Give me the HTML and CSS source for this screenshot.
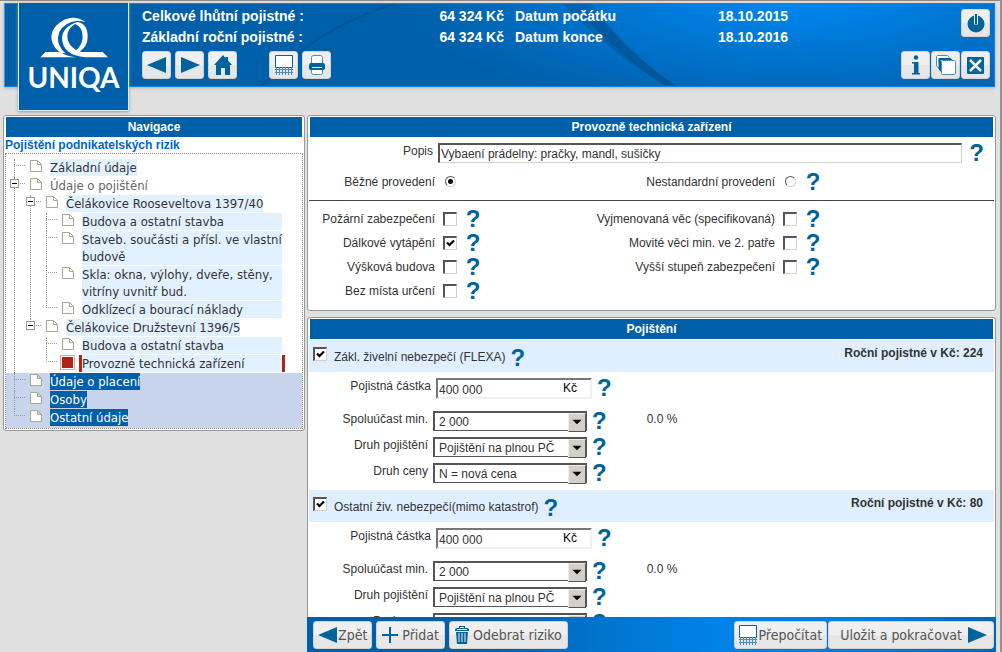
FILE: index.html
```html
<!DOCTYPE html>
<html lang="cs">
<head>
<meta charset="utf-8">
<title>Pojištění podnikatelských rizik</title>
<link rel="stylesheet" href="styles.css">
</head>
<body>
<svg class="defs" aria-hidden="true">
  <symbol id="i-page" viewBox="0 0 12 12"><path d="M.5.5h7l4 4v7H.5zM7.5.5v4h4" fill="#fff" stroke="#a9a98f"/></symbol>
  <symbol id="i-active" viewBox="0 0 15 15"><path d="M.5.5h14v14H.5z" fill="#fff" stroke="#dda7a3"/><path d="M2 2h11v11H2z" fill="#b02418"/></symbol>
  <symbol id="i-left" viewBox="0 0 20 18"><path d="M0 9 19 1v16z" fill="#00639c"/></symbol>
  <symbol id="i-right" viewBox="0 0 20 18"><path d="M20 9 1 1v16z" fill="#00639c"/></symbol>
  <symbol id="i-home" viewBox="0 0 18 20"><path d="M9 0 0 10h2v10h5v-7h4v7h5V10h2L14 5.500V2h-2.500v1z" fill="#00639c"/></symbol>
  <symbol id="i-calc" viewBox="0 0 18 20"><path d="M.5 12.500v-12h17v12z" fill="#fff" stroke="#00639c"/><path d="M1.500 12v8M4.500 12v8M7.500 12v8M10.500 12v8M13.500 12v8M16.500 12v8M0 14.500h18M0 17.500h18" stroke="#4a8db5"/></symbol>
  <symbol id="i-print" viewBox="0 0 16 20"><rect x="2.500" y=".5" width="11" height="19" rx="2" fill="#fff" stroke="#4a8db5"/><rect y="8" width="16" height="7" rx="2" fill="#00639c"/><path d="M3 12.500h10" stroke="#fff"/></symbol>
  <symbol id="i-power" viewBox="0 0 18 20"><circle cx="9" cy="11" r="8.500" fill="#00639c"/><path d="M9 1v10.500" stroke="#efefef" stroke-width="4"/><path d="M9 1v10" stroke="#00639c" stroke-width="2"/></symbol>
  <symbol id="i-info" viewBox="0 0 10 20"><circle cx="5" cy="2.500" r="2.200" fill="#00639c"/><path d="M1 7h6.500v11H9v1.500H1V18h2V8.500H1z" fill="#00639c"/></symbol>
  <symbol id="i-copy" viewBox="0 0 20 20"><path d="M3 13 .5 11V1.500l1-1h10l2 2" fill="#fff" stroke="#4a8db5"/><path d="M2.500 3h12l2 2H5v12l-2.500-3z" fill="#00639c"/><rect x="5.500" y="5.500" width="14" height="14" rx="1" fill="#fff" stroke="#4a8db5"/></symbol>
  <symbol id="i-close" viewBox="0 0 17 17"><rect width="17" height="17" rx="1" fill="#00639c"/><path d="m3 3 11 11M14 3 3 14" stroke="#fff" stroke-width="2.500"/></symbol>
  <symbol id="i-plus" viewBox="0 0 16 16"><path d="M8 0v16M0 8h16" stroke="#00639c" stroke-width="2"/></symbol>
  <symbol id="i-trash" viewBox="0 0 14 18"><path d="M0 4q0-2 2-2h10q2 0 2 2v1H0zM4 0h6v2H9V1H5v1H4zM1 6h12l-1 12H2z" fill="#00639c"/><path d="M4 7v9M7 7v9M10 7v9M2 3.500h10" stroke="#eee"/></symbol>
</svg>

<header class="top">
  <svg class="swoosh" viewBox="0 0 991 84" preserveAspectRatio="none" aria-hidden="true">
    <path d="M258 84Q310 25 390 0" fill="none" stroke="#004f8e" stroke-width="2" opacity=".6"/>
    <path d="M559 0h28q38 50 85 84h-10Q600 45 559 0z" fill="#00477f" opacity=".35"/>
    <path d="M600 18Q630 55 672 84h-10Q620 57 585 18z" fill="#00477f" opacity=".3"/>
  </svg>
  <a class="logo" href="#">
    <svg class="mark" viewBox="0 0 252 150" aria-hidden="true">
      <g fill="#fff">
        <path d="M160 30Q130 10 100 22 58 42 58 78q4 30 30 46h12Q76 102 78 76q4-34 40-46 22-6 42 0z"/>
        <path d="M136 30q31 4 31 45 0 30-27 45l-12-2q22-14 24-43 0-30-22-39-24 12-24 38 2 34 44 46h62l16 16h-68Q92 130 90 78q2-34 46-48z"/>
        <path d="M25 136l15-16h44q16 12 48 16z"/>
      </g>
    </svg>
    <span>UNIQA</span>
  </a>
  <div class="top-main">
    <dl class="summary">
      <dt>Celkové lhůtní pojistné :</dt><dd>64 324 Kč</dd><dt>Datum počátku</dt><dd>18.10.2015</dd>
      <dt>Základní roční pojistné :</dt><dd>64 324 Kč</dd><dt>Datum konce</dt><dd>18.10.2016</dd>
    </dl>
    <div class="tools">
      <button class="btn icon" aria-label="Zpět"><svg width="20" height="18"><use href="#i-left"/></svg></button>
      <button class="btn icon" aria-label="Vpřed"><svg width="20" height="18"><use href="#i-right"/></svg></button>
      <button class="btn icon" aria-label="Domů"><svg width="18" height="20"><use href="#i-home"/></svg></button>
      <button class="btn icon apart" aria-label="Kalkulačka"><svg width="18" height="20"><use href="#i-calc"/></svg></button>
      <button class="btn icon" aria-label="Tisk"><svg width="16" height="20"><use href="#i-print"/></svg></button>
    </div>
  </div>
  <div class="top-side">
    <button class="btn icon" aria-label="Odhlásit"><svg width="18" height="20"><use href="#i-power"/></svg></button>
    <div class="side-row">
      <button class="btn icon" aria-label="Informace"><svg width="10" height="20"><use href="#i-info"/></svg></button>
      <button class="btn icon" aria-label="Kopie"><svg width="20" height="20"><use href="#i-copy"/></svg></button>
      <button class="btn icon" aria-label="Zavřít"><svg width="17" height="17"><use href="#i-close"/></svg></button>
    </div>
  </div>
</header>

<div class="columns">
  <nav class="panel nav">
    <h2 class="bar">Navigace</h2>
    <h3 class="nav-title">Pojištění podnikatelských rizik</h3>
    <ul class="tree">
      <li><div class="row"><svg class="page"><use href="#i-page"/></svg><a href="#">Základní údaje</a></div></li>
      <li><div class="row"><button class="toggle" aria-label="Sbalit"></button><svg class="page"><use href="#i-page"/></svg><a class="plain" href="#">Údaje o pojištění</a></div>
        <ul>
          <li><div class="row"><button class="toggle" aria-label="Sbalit"></button><svg class="page"><use href="#i-page"/></svg><a href="#">Čelákovice Rooseveltova 1397/40</a></div>
            <ul>
              <li><div class="row"><svg class="page"><use href="#i-page"/></svg><a class="wide" href="#">Budova a ostatní stavba</a></div></li>
              <li><div class="row"><svg class="page"><use href="#i-page"/></svg><a class="wide" href="#">Staveb. součásti a přísl. ve vlastní budově</a></div></li>
              <li><div class="row"><svg class="page"><use href="#i-page"/></svg><a class="wide" href="#">Skla: okna, výlohy, dveře, stěny, vitríny uvnitř bud.</a></div></li>
              <li><div class="row"><svg class="page"><use href="#i-page"/></svg><a class="wide" href="#">Odklízecí a bourací náklady</a></div></li>
            </ul>
          </li>
          <li><div class="row"><button class="toggle" aria-label="Sbalit"></button><svg class="page"><use href="#i-page"/></svg><a href="#">Čelákovice Družstevní 1396/5</a></div>
            <ul>
              <li><div class="row"><svg class="page"><use href="#i-page"/></svg><a class="wide" href="#">Budova a ostatní stavba</a></div></li>
              <li><div class="row"><svg class="page active"><use href="#i-active"/></svg><a class="wide current" href="#">Provozně technická zařízení</a></div></li>
            </ul>
          </li>
        </ul>
      </li>
      <li class="marked"><div class="row"><svg class="page"><use href="#i-page"/></svg><a href="#">Údaje o placení</a></div></li>
      <li class="marked"><div class="row"><svg class="page"><use href="#i-page"/></svg><a href="#">Osoby</a></div></li>
      <li class="marked"><div class="row"><svg class="page"><use href="#i-page"/></svg><a href="#">Ostatní údaje</a></div></li>
    </ul>
  </nav>

  <main class="content">
    <section class="panel">
      <h2 class="bar">Provozně technická zařízení</h2>
      <div class="describe">
        <label for="popis">Popis</label>
        <input class="text" id="popis" type="text" value="Vybaení prádelny: pračky, mandl, sušičky">
        <button class="help" aria-label="Nápověda">?</button>
      </div>
      <div class="options kind">
        <label for="k1">Běžné provedení</label><input class="radio" id="k1" name="kind" type="radio" checked><span></span>
        <label for="k2">Nestandardní provedení</label><input class="radio" id="k2" name="kind" type="radio"><button class="help" aria-label="Nápověda">?</button>
      </div>
      <div class="options flags">
        <label for="f1">Požární zabezpečení</label><input class="check" id="f1" type="checkbox"><button class="help" aria-label="Nápověda">?</button>
        <label for="f2">Vyjmenovaná věc (specifikovaná)</label><input class="check" id="f2" type="checkbox"><button class="help" aria-label="Nápověda">?</button>
        <label for="f3">Dálkové vytápění</label><input class="check" id="f3" type="checkbox" checked><button class="help" aria-label="Nápověda">?</button>
        <label for="f4">Movité věci min. ve 2. patře</label><input class="check" id="f4" type="checkbox"><button class="help" aria-label="Nápověda">?</button>
        <label for="f5">Výšková budova</label><input class="check" id="f5" type="checkbox"><button class="help" aria-label="Nápověda">?</button>
        <label for="f6">Vyšší stupeň zabezpečení</label><input class="check" id="f6" type="checkbox"><button class="help" aria-label="Nápověda">?</button>
        <label for="f7">Bez místa určení</label><input class="check" id="f7" type="checkbox"><button class="help" aria-label="Nápověda">?</button>
      </div>
    </section>

    <section class="panel cover">
      <h2 class="bar">Pojištění</h2>
      <div class="band">
        <input class="check" id="c1" type="checkbox" checked>
        <label for="c1">Zákl. živelní nebezpečí (FLEXA)</label>
        <button class="help" aria-label="Nápověda">?</button>
        <strong>Roční pojistné v Kč: 224</strong>
      </div>
      <div class="fields">
        <div class="field amount"><label for="a1">Pojistná částka</label><span class="money"><input id="a1" type="text" value="400 000"><span>Kč</span></span><button class="help" aria-label="Nápověda">?</button></div>
        <div class="field"><label for="a2">Spoluúčast min.</label><span class="pick"><select id="a2"><option>2 000</option></select></span><button class="help" aria-label="Nápověda">?</button><output>0.0 %</output></div>
        <div class="field"><label for="a3">Druh pojištění</label><span class="pick"><select id="a3"><option>Pojištění na plnou PČ</option></select></span><button class="help" aria-label="Nápověda">?</button></div>
        <div class="field"><label for="a4">Druh ceny</label><span class="pick"><select id="a4"><option>N = nová cena</option></select></span><button class="help" aria-label="Nápověda">?</button></div>
      </div>
      <div class="band">
        <input class="check" id="c2" type="checkbox" checked>
        <label for="c2">Ostatní živ. nebezpečí(mimo katastrof)</label>
        <button class="help" aria-label="Nápověda">?</button>
        <strong>Roční pojistné v Kč: 80</strong>
      </div>
      <div class="fields">
        <div class="field amount"><label for="b1">Pojistná částka</label><span class="money"><input id="b1" type="text" value="400 000"><span>Kč</span></span><button class="help" aria-label="Nápověda">?</button></div>
        <div class="field"><label for="b2">Spoluúčast min.</label><span class="pick"><select id="b2"><option>2 000</option></select></span><button class="help" aria-label="Nápověda">?</button><output>0.0 %</output></div>
        <div class="field"><label for="b3">Druh pojištění</label><span class="pick"><select id="b3"><option>Pojištění na plnou PČ</option></select></span><button class="help" aria-label="Nápověda">?</button></div>
        <div class="field"><label for="b4">Druh ceny</label><span class="pick"><select id="b4"><option>N = nová cena</option></select></span><button class="help" aria-label="Nápověda">?</button></div>
      </div>
    </section>

    <footer class="actions">
      <button class="btn"><svg width="20" height="18"><use href="#i-left"/></svg>Zpět</button>
      <button class="btn spaced"><svg width="16" height="16"><use href="#i-plus"/></svg>Přidat</button>
      <button class="btn spaced"><svg width="14" height="18"><use href="#i-trash"/></svg>Odebrat riziko</button>
      <div class="right">
        <button class="btn count"><svg width="18" height="20"><use href="#i-calc"/></svg>Přepočítat</button>
        <button class="btn save">Uložit a pokračovat<svg width="20" height="18"><use href="#i-right"/></svg></button>
      </div>
    </footer>
  </main>
</div>
</body>
</html>
```
FILE: styles.css
```css
* { box-sizing: border-box; }

body {
  margin: 0;
  height: 100vh;
  display: flex;
  flex-direction: column;
  overflow: hidden;
  background: #e0e0e0;
  border-top: 1px solid #8a8a8a;
  border-right: 2px solid #929292;
  padding: 2px 3px 0 3px;
  color: #333;
  font: 12px/16px "Liberation Sans", Arial, sans-serif;
}

h2, h3, dl, dd, ul { margin: 0; padding: 0; }
ul { list-style: none; }
a { color: inherit; text-decoration: none; }
button, input, select { font: inherit; color: inherit; margin: 0; padding: 0; }
svg { display: block; flex: none; }
.defs { position: absolute; width: 0; height: 0; }

/* Header */
.top {
  position: relative;
  z-index: 1;
  display: flex;
  flex: none;
  margin: 0 2px 28px 1px;
  height: 84px;
  border: 1px solid #1684de;
  border-left-color: #4d92cc;
  background: radial-gradient(ellipse 400px 120px at 80% -10%, #0088f4, #005fa9);
  box-shadow: 0 1px 3px #aaa;
  color: #fff;
}
.swoosh { position: absolute; inset: 0; width: 100%; height: 100%; }
.logo {
  position: relative;
  display: flex;
  flex-direction: column;
  align-items: center;
  width: 111px;
  height: 108px;
  margin: -1px 13px 0 13px;
  padding-top: 9px;
  background: #005fa9;
  border: 1px solid #dceaf5;
  border-top: 0;
  box-shadow: 0 1px 3px #999;
  font: 700 28px/30px Lato, sans-serif;
}
.mark { width: 84px; height: 50px; }
.top-main { position: relative; flex: 1; padding-top: 2px; }
.summary {
  display: grid;
  grid-template-columns: 250px 112px 200px 84px;
  font-weight: 700;
  font-size: 14px;
  line-height: 21px;
}
.summary dd { text-align: right; }
.summary dt:nth-of-type(even) { padding-left: 11px; }
.tools { display: flex; gap: 4px; padding-top: 3px; }
.tools .apart { margin-left: 28px; }
.top-side {
  position: relative;
  display: flex;
  flex-direction: column;
  align-items: flex-end;
  gap: 14px;
  padding: 5px 4px 0 0;
}
.side-row { display: flex; gap: 1px; }

.btn {
  display: flex;
  align-items: center;
  justify-content: center;
  height: 28px;
  padding: 0 4px;
  border: 1px solid #d2d2d2;
  border-radius: 3px;
  background: linear-gradient(#efefef 50%, #e6e6e6 50%);
  color: #555;
  font: 14px/18px "DejaVu Sans Condensed", Tahoma, sans-serif;
  white-space: nowrap;
}
.icon { width: 29px; padding: 0; }

/* Panels */
.columns { display: flex; flex: 1; min-height: 0; gap: 2px; align-items: flex-start; }
.panel { border: 1px solid #999; border-radius: 3px; background: #fff; padding: 1px; }
.bar {
  margin: 0 1px;
  background: #005fa9;
  color: #fff;
  font-size: 12px;
  line-height: 20px;
  text-align: center;
}

/* Navigation tree */
.nav { flex: 0 0 302px; }
.nav-title { color: #0066cc; font-size: 12px; line-height: 16px; }
.tree {
  border: 1px dotted #888;
  padding-top: 5px;
  font: 13px/17px "DejaVu Sans Condensed", Tahoma, sans-serif;
}
.tree li { position: relative; padding-left: 8px; }
.tree li::before {
  content: "";
  position: absolute;
  left: 8px;
  top: 0;
  bottom: 0;
  border-left: 1px dotted #999;
}
.tree li:last-child::before { bottom: auto; height: 7px; }
.tree ul { margin-left: 8px; }
.row { position: relative; display: flex; padding: 0 0 1px 16px; }
.row::before {
  content: "";
  position: absolute;
  left: 0;
  top: 6px;
  width: 11px;
  border-top: 1px dotted #999;
}
.page { width: 12px; height: 12px; margin: 1px 8px 0 0; }
.page.active { width: 15px; height: 15px; margin: 0 7px 0 -2px; }
.row a { background: #e2f1ff; }
.row a.plain { background: none; color: #666; }
.row a.wide { width: 200px; }
.row a.current { box-shadow: -3px 0 #b02418, 3px 0 #b02418; }
.tree .marked { background: #c8d3ec; }
.tree .marked:last-child { padding-bottom: 1px; }
.marked .row a { background: #005fa9; color: #fff; }
.toggle {
  position: absolute;
  left: -4px;
  top: 2px;
  width: 9px;
  height: 9px;
  border: 1px solid #999;
  background: linear-gradient(#000, #000) center / 5px 1px no-repeat #fff;
}

/* Content */
.content { flex: 1; min-width: 0; height: 100%; display: flex; flex-direction: column; margin-right: 1px; }
.help {
  border: 0;
  background: none;
  color: #00639c;
  font: 700 24px/20px "Liberation Sans", Arial, sans-serif;
  height: 20px;
  cursor: pointer;
}
.text {
  flex: 1;
  min-width: 0;
  height: 20px;
  padding: 0 1px;
  border: 1px solid #d4d0c8;
  border-top: 2px solid #555;
  border-left: 2px solid #555;
  background: #fff;
}
.describe { display: flex; gap: 5px; padding: 6px 10px 0 1px; }
.describe label { width: 123px; text-align: right; }
.describe .help { margin-left: 2px; }
.options {
  display: grid;
  grid-template-columns: 125px 14px 16px 286px 14px 16px;
  column-gap: 8px;
  align-items: center;
  padding-left: 1px;
}
.options label { text-align: right; white-space: nowrap; }
.kind { height: 38px; border-bottom: 1px solid #444; }
.flags { grid-auto-rows: 24px; padding-top: 6px; padding-bottom: 6px; }
.check {
  appearance: none;
  width: 14px;
  height: 14px;
  border: 1px solid #d4d0c8;
  border-top: 2px solid #555;
  border-left: 2px solid #555;
  background: #fff;
}
.check:checked {
  background: url("data:image/svg+xml,%3Csvg xmlns='http://www.w3.org/2000/svg' viewBox='0 0 11 11'%3E%3Cpath d='M2 4.500 4.500 7 9 2.500' fill='none' stroke='%23000' stroke-width='2.200'/%3E%3C/svg%3E") #fff;
}
.radio {
  appearance: none;
  justify-self: center;
  width: 11px;
  height: 11px;
  border: 1px solid;
  border-color: #555 #d4d0c8 #d4d0c8 #555;
  border-radius: 50%;
}
.radio:checked { background: radial-gradient(circle, #000 2px, #fff 3px); }

.cover { flex: 1; min-height: 0; overflow: hidden; margin-top: 6px; border-bottom: 0; border-radius: 3px 3px 0 0; }
.band { display: flex; height: 32px; background: #e0efff; padding: 0 11px 0 4px; }
.cover .bar { margin-bottom: 1px; }
.band .check { margin: 7px 7px 0 0; }
.band label { line-height: 34px; }
.band .help { margin: 8px 0 0 5px; }
.band strong { margin-left: auto; line-height: 26px; }
.fields { display: grid; gap: 6px; padding: 6px 0 7px; }
.field { display: flex; gap: 5px; height: 20px; }
.field label { width: 119px; text-align: right; }
.field output { margin-left: 35px; }
.amount { margin-bottom: 7px; }
.amount label { width: 122px; }
.money {
  display: flex;
  width: 156px;
  height: 21px;
  border: 2px solid #efefef;
  border-top-color: #777;
  border-left-color: #777;
}
.money input { flex: 1; min-width: 0; border: 0; outline: 0; padding: 2px 1px 0; background: none; }
.money span { padding-right: 13px; color: #000; }
.pick { position: relative; width: 154px; height: 20px; }
.pick select {
  appearance: none;
  width: 100%;
  height: 100%;
  padding: 0 20px 0 4px;
  border: 1px solid #555;
  border-width: 2px 1px 1px 2px;
  border-radius: 0;
  background: #fff;
}
.pick::after {
  content: "";
  position: absolute;
  right: 1px;
  top: 2px;
  width: 16px;
  height: 17px;
  border: 1px solid;
  border-color: #eee #555 #555 #eee;
  background: url("data:image/svg+xml,%3Csvg xmlns='http://www.w3.org/2000/svg' viewBox='0 0 14 15'%3E%3Cpath d='M3 5h8L7 9z'/%3E%3C/svg%3E") #d4d0c8;
  pointer-events: none;
}

.actions {
  display: flex;
  flex: none;
  gap: 4px;
  height: 35px;
  padding: 4px 2px 3px 6px;
  background: linear-gradient(90deg, #005fa9, #005fa9 25%, #0073cd 42%, #0082e8 60%, #0078d8 85%, #0066b6);
}
.actions .spaced { gap: 4px; padding: 0 5px; }
.actions .right { display: flex; gap: 1px; margin-left: auto; }
.actions .count { gap: 2px; }
.actions .save { gap: 5px; padding: 0 6px 0 11px; }
```
